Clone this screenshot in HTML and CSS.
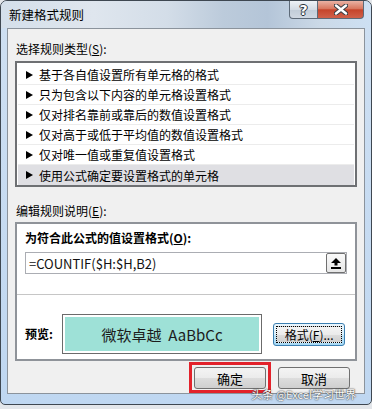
FILE: index.html
```html
<!DOCTYPE html>
<html lang="zh-CN">
<head>
  <meta charset="UTF-8">
  <title>新建格式规则</title>
  <link rel="stylesheet" href="styles.css">
</head>
<body>
  <div class="window">
    <div class="titlebar">
      <span class="title">新建格式规则</span>
      <div class="caption">
        <div class="cap-btn help">?</div>
        <div class="cap-btn close">
          <svg width="14" height="11" viewBox="0 0 14 11">
            <path d="M2 1.5 L12 9.5 M12 1.5 L2 9.5" stroke="#3b3f45" stroke-width="4.5" stroke-linecap="round"/>
            <path d="M2 1.5 L12 9.5 M12 1.5 L2 9.5" stroke="#ffffff" stroke-width="2.4" stroke-linecap="round"/>
          </svg>
        </div>
      </div>
    </div>

    <div class="client">
      <div class="label first">选择规则类型(<u>S</u>):</div>
      <div class="rule-list">
        <div class="rule-item"><span class="arrow"></span>基于各自值设置所有单元格的格式</div>
        <div class="rule-item"><span class="arrow"></span>只为包含以下内容的单元格设置格式</div>
        <div class="rule-item"><span class="arrow"></span>仅对排名靠前或靠后的数值设置格式</div>
        <div class="rule-item"><span class="arrow"></span>仅对高于或低于平均值的数值设置格式</div>
        <div class="rule-item"><span class="arrow"></span>仅对唯一值或重复值设置格式</div>
        <div class="rule-item selected"><span class="arrow"></span>使用公式确定要设置格式的单元格</div>
      </div>

      <div class="label second">编辑规则说明(<u>E</u>):</div>
      <div class="rule-edit">
        <div class="rule-top">
          <div class="bold-label">为符合此公式的值设置格式(<u>O</u>):</div>
          <div class="formula">
            <span class="formula-text">=COUNTIF($H:$H,B2)</span>
            <div class="collapse-btn">
              <svg width="10" height="11" viewBox="0 0 10 11">
                <polygon points="5,0 10,5 6.5,5 6.5,7.5 3.5,7.5 3.5,5 0,5" fill="#000"/>
                <rect x="0" y="9" width="10" height="2" fill="#000"/>
              </svg>
            </div>
          </div>
        </div>
        <div class="preview-row">
          <span class="bold-label preview-label">预览:</span>
          <div class="preview-box">
            <div class="preview-fill">微软卓越&nbsp; AaBbCc</div>
          </div>
          <div class="btn focused"><span class="focus-rect">格式(<u>F</u>)...</span></div>
        </div>
      </div>

      <div class="actions">
        <div class="btn ok">确定</div>
        <div class="btn">取消</div>
      </div>
    </div>

    <div class="watermark">头条 @Excel学习世界</div>
  </div>
</body>
</html>
```

FILE: styles.css
```css
body {
  margin: 0;
  background: #e3e6ea;
  font-family: "Noto Sans CJK SC", "Noto Sans", sans-serif;
  font-size: 12px;
  color: #000;
}

.window {
  position: relative;
  width: 372px;
  height: 405px;
  box-sizing: border-box;
  border: 1px solid #3e4751;
  border-radius: 7px 7px 5px 5px;
  background: linear-gradient(to bottom, #cfe0f2, #bfd7f1);
  padding: 0 6px 10px;
  display: flex;
  flex-direction: column;
  overflow: hidden;
}

/* title bar */
.titlebar {
  height: 27px;
  margin: 0 -6px;
  padding: 0 7px 0 7px;
  display: flex;
  align-items: flex-start;
  background: linear-gradient(to right, #d4dfea 0%, #dfe6ee 25%, #d3dde8 45%, #bccbdb 60%, #b4c5d8 72%, #cbd9e7 86%, #cde0f3 100%);
}

.title {
  line-height: 27px;
  font-size: 12.5px;
  padding-left: 1px;
  color: #000;
}

.caption {
  margin-left: auto;
  display: flex;
}

.cap-btn {
  height: 18px;
  box-sizing: border-box;
  border: 1px solid #5d6a78;
  border-top: none;
  display: flex;
  align-items: center;
  justify-content: center;
}

.help {
  width: 29px;
  border-radius: 0 0 0 4px;
  background: linear-gradient(to bottom, #eef2f6, #d3dbe4 50%, #c1ccd8 51%, #cfd8e2);
  color: #fff;
  font-weight: bold;
  font-size: 14px;
  font-family: "DejaVu Sans", sans-serif;
  text-shadow: 0 0 1px #2b323a, 1px 0 0 #2b323a, -1px 0 0 #2b323a, 0 1px 0 #2b323a, 0 -1px 0 #2b323a;
}

.close {
  width: 46px;
  border-left: none;
  border-radius: 0 0 4px 0;
  background: linear-gradient(to bottom, #eab2a4, #d8775f 45%, #c6442b 52%, #d0614a);
}

/* client area */
.client {
  flex: 1;
  border: 1px solid #8b939c;
  background: #f0f0f0;
  padding: 0 7px;
  display: flex;
  flex-direction: column;
}

.label {
  line-height: 16px;
  padding-left: 1px;
}

.label.first {
  margin-top: 12px;
}

.label.second {
  margin-top: 16px;
}

u {
  text-decoration: underline;
  text-underline-offset: 1px;
}

.rule-list {
  margin-top: 4px;
  border: 2px solid #6e7073;
  background: #fff;
  padding: 2px 1px 0;
}

.rule-item {
  height: 19px;
  border-bottom: 1px solid #ececec;
  display: flex;
  align-items: center;
  padding-left: 8px;
  font-size: 12px;
}

.rule-item.selected {
  height: 20px;
  border-bottom: none;
  background: #dfdfe3;
}

.arrow {
  width: 0;
  height: 0;
  border-left: 7px solid #000;
  border-top: 4px solid transparent;
  border-bottom: 4px solid transparent;
  margin-right: 6px;
}

.rule-edit {
  margin-top: 3px;
  border: 2px solid #8f9399;
  background: #fff;
  height: 139px;
  box-sizing: border-box;
}

.rule-top {
  padding: 6px 8px 20px;
  border-bottom: 1px solid #c6c6c6;
}

.bold-label {
  font-weight: bold;
  line-height: 16px;
}

.formula {
  margin-top: 6px;
  height: 22px;
  box-sizing: border-box;
  border: 1px solid #abadb3;
  display: flex;
  align-items: center;
  padding-left: 3px;
}

.formula-text {
  font-size: 13px;
  color: #111;
}

.collapse-btn {
  margin-left: auto;
  width: 20px;
  height: 20px;
  box-sizing: border-box;
  border: 1px solid #707070;
  border-radius: 2px;
  background: linear-gradient(to bottom, #fafafa, #e6e6e6);
  display: flex;
  align-items: center;
  justify-content: center;
}

.preview-row {
  display: flex;
  align-items: center;
  padding: 19px 10px 0 8px;
}

.preview-label {
  width: 37px;
}

.preview-box {
  width: 201px;
  height: 40px;
  box-sizing: border-box;
  border: 1px solid #6b6b6b;
  padding: 2px;
}

.preview-fill {
  height: 100%;
  background: #9ee1d7;
  display: flex;
  align-items: center;
  justify-content: center;
  font-size: 15px;
  color: #1c1c1c;
}

/* buttons */
.btn {
  width: 72px;
  height: 22px;
  box-sizing: border-box;
  border: 1px solid #707070;
  border-radius: 3px;
  background: linear-gradient(to bottom, #f4f4f4, #ebebeb 50%, #dddddd 51%, #cfcfcf);
  display: flex;
  align-items: center;
  justify-content: center;
  font-size: 13px;
}

.btn.focused {
  margin-left: 11px;
  height: 23px;
  border-color: #3c7fb1;
  background: linear-gradient(to bottom, #eaf6fd, #d9f0fc 50%, #bee6fd 51%, #a7d9f5);
  padding: 2px;
  font-size: 12px;
}

.focus-rect {
  flex: 1;
  align-self: stretch;
  border: 1px dotted #000;
  display: flex;
  align-items: center;
  justify-content: center;
  background: linear-gradient(to bottom, #f4f4f4, #ebebeb 50%, #dddddd 51%, #cfcfcf);
}

.actions {
  margin-top: 6px;
  display: flex;
  justify-content: flex-end;
  gap: 12px;
  padding-right: 7px;
}

/* red highlight frame drawn over the OK button */
.btn.ok {
  position: relative;
}

.btn.ok::after {
  content: "";
  position: absolute;
  left: -6px;
  right: -6px;
  top: -6px;
  bottom: -5px;
  border: 3px solid #e3222b;
}

.watermark {
  position: absolute;
  right: 15px;
  bottom: 2px;
  font-size: 11px;
  color: #fbfbfb;
  text-shadow: 0 0 2px #444, 0 0 1px #222;
}
```
